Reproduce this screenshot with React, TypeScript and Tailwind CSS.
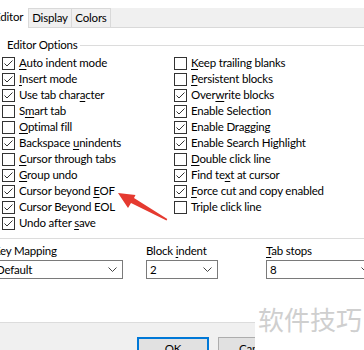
import React from "react";

type Opt = [string, boolean];

const leftOpts: Opt[] = [
  ["&Auto indent mode", true],
  ["&Insert mode", true],
  ["Use tab char&acter", true],
  ["S&mart tab", false],
  ["&Optimal fill", false],
  ["Backspace &unindents", true],
  ["&Cursor through tabs", false],
  ["&Group undo", true],
  ["Cursor beyond &EOF", true],
  ["Cursor Beyond EOL", true],
  ["Undo after &save", true],
];

const rightOpts: Opt[] = [
  ["&Keep trailing blanks", false],
  ["&Persistent blocks", false],
  ["Over&write blocks", true],
  ["Enable Selection", true],
  ["Enable Dragging", true],
  ["Enable Search Highlight", true],
  ["&Double click line", false],
  ["Find te&xt at cursor", true],
  ["&Force cut and copy enabled", true],
  ["Triple click line", false],
];

// "&" marks the mnemonic letter
function Mnemonic({ text }: { text: string }) {
  const i = text.indexOf("&");
  if (i < 0) return <>{text}</>;
  return (
    <>
      {text.slice(0, i)}
      <span className="underline underline-offset-2">{text[i + 1]}</span>
      {text.slice(i + 2)}
    </>
  );
}

function CheckBox({ label, checked }: { label: string; checked: boolean }) {
  return (
    <div className="flex h-4 items-center gap-[4px] whitespace-nowrap">
      <span className="flex h-[13px] w-[13px] shrink-0 items-center justify-center border border-[#333333] bg-white">
        {checked && (
          <svg width="11" height="11" viewBox="0 0 11 11">
            <polyline points="1.5,5.5 4,8 9.5,2.5" fill="none" stroke="#333" strokeWidth="1" />
          </svg>
        )}
      </span>
      <span className="leading-4">
        <Mnemonic text={label} />
      </span>
    </div>
  );
}

function Combo({ value, className }: { value: string; className: string }) {
  return (
    <div className={"flex h-[19px] items-center justify-between border border-[#7a7a7a] bg-white pl-[3px] pr-[5px] " + className}>
      <span>{value}</span>
      <svg width="9" height="5" viewBox="0 0 9 5">
        <polyline points="0.5,0.5 4.5,4.5 8.5,0.5" fill="none" stroke="#444" strokeWidth="1" />
      </svg>
    </div>
  );
}

export default function App() {
  return (
    <div className="relative h-[350px] w-[364px] overflow-hidden bg-white text-[11.5px] tracking-[-0.2px] text-black" style={{ fontFamily: 'Lato, "Noto Sans", sans-serif' }}>
      {/* tabs */}
      <div className="h-[8px] bg-white" />
      <div className="flex h-[20px] border-b border-[#d9d9d9] bg-[#f0f0f0]">
        <div className="-mt-[3px] flex h-[23px] w-[28px] items-center overflow-hidden bg-white">
          <span className="-ml-[6px]">Editor</span>
        </div>
        <div className="flex w-[44px] items-center justify-center border-x border-t border-[#d9d9d9]">Display</div>
        <div className="flex w-[39px] items-center justify-center border-r border-t border-[#d9d9d9]">Colors</div>
      </div>

      {/* panel */}
      <div className="flex h-[295px] flex-col border-b border-[#dcdcdc] bg-white">
        <div className="mt-[9px] flex h-[16px] items-center">
          <span className="pl-[7px] pr-[2px] leading-4">Editor Options</span>
          <div className="h-px flex-1 bg-[#dcdcdc]" />
        </div>
        <div className="mt-[2px] grid grid-cols-[174px_1fr]">
          <div className="flex flex-col pl-[2px]">
            {leftOpts.map(([l, c]) => (
              <CheckBox key={l} label={l} checked={c} />
            ))}
          </div>
          <div className="flex flex-col">
            {rightOpts.map(([l, c]) => (
              <CheckBox key={l} label={l} checked={c} />
            ))}
          </div>
        </div>
        <div className="mt-[7px] h-px bg-[#dcdcdc]" />

        <div className="mt-[2px] flex">
          <div className="-ml-[7px] flex w-[131px] flex-col">
            <span className="h-[18px] leading-5">
              <Mnemonic text="&Key Mapping" />
            </span>
            <Combo value="Default" className="-ml-[1px] mt-[1px] w-[131px] pl-[0px]" />
          </div>
          <div className="ml-[23px] flex w-[72px] flex-col">
            <span className="h-[18px] leading-5">
              <Mnemonic text="Block &indent" />
            </span>
            <Combo value="2" className="mt-[1px] w-[72px]" />
          </div>
          <div className="ml-[48px] flex w-[110px] flex-col">
            <span className="h-[18px] leading-5">
              <Mnemonic text="&Tab stops" />
            </span>
            <Combo value="8" className="mt-[1px] w-[110px]" />
          </div>
        </div>
      </div>

      {/* buttons */}
      <div className="flex h-[27px] gap-[9px] bg-[#f0f0f0] pl-[137px] pt-[14px]">
        <div className="flex h-[23px] w-[72px] shrink-0 items-center justify-center border-2 border-[#0078d7] bg-[#e1e1e1]">OK</div>
        <div className="flex h-[23px] w-[75px] shrink-0 items-center justify-center border border-[#adadad] bg-[#e1e1e1]">Cancel</div>
      </div>

      {/* watermark */}
      <div className="absolute right-0 bottom-0 left-[255px] top-[300px] bg-white" />
      <div className="absolute top-[303px] left-[258px] text-[26px] leading-8 tracking-normal text-[#cfcfcf]" style={{ fontFamily: '"Noto Sans CJK SC", sans-serif' }}>
        软件技巧
      </div>

      {/* red arrow */}
      <svg className="absolute top-0 left-0" width="364" height="350" viewBox="0 0 364 350">
        <polygon
          points="118,193 128,208 131,203 166.5,220.5 167.3,219 134,198 135.5,195"
          fill="#e53a30"
        />
      </svg>
    </div>
  );
}
